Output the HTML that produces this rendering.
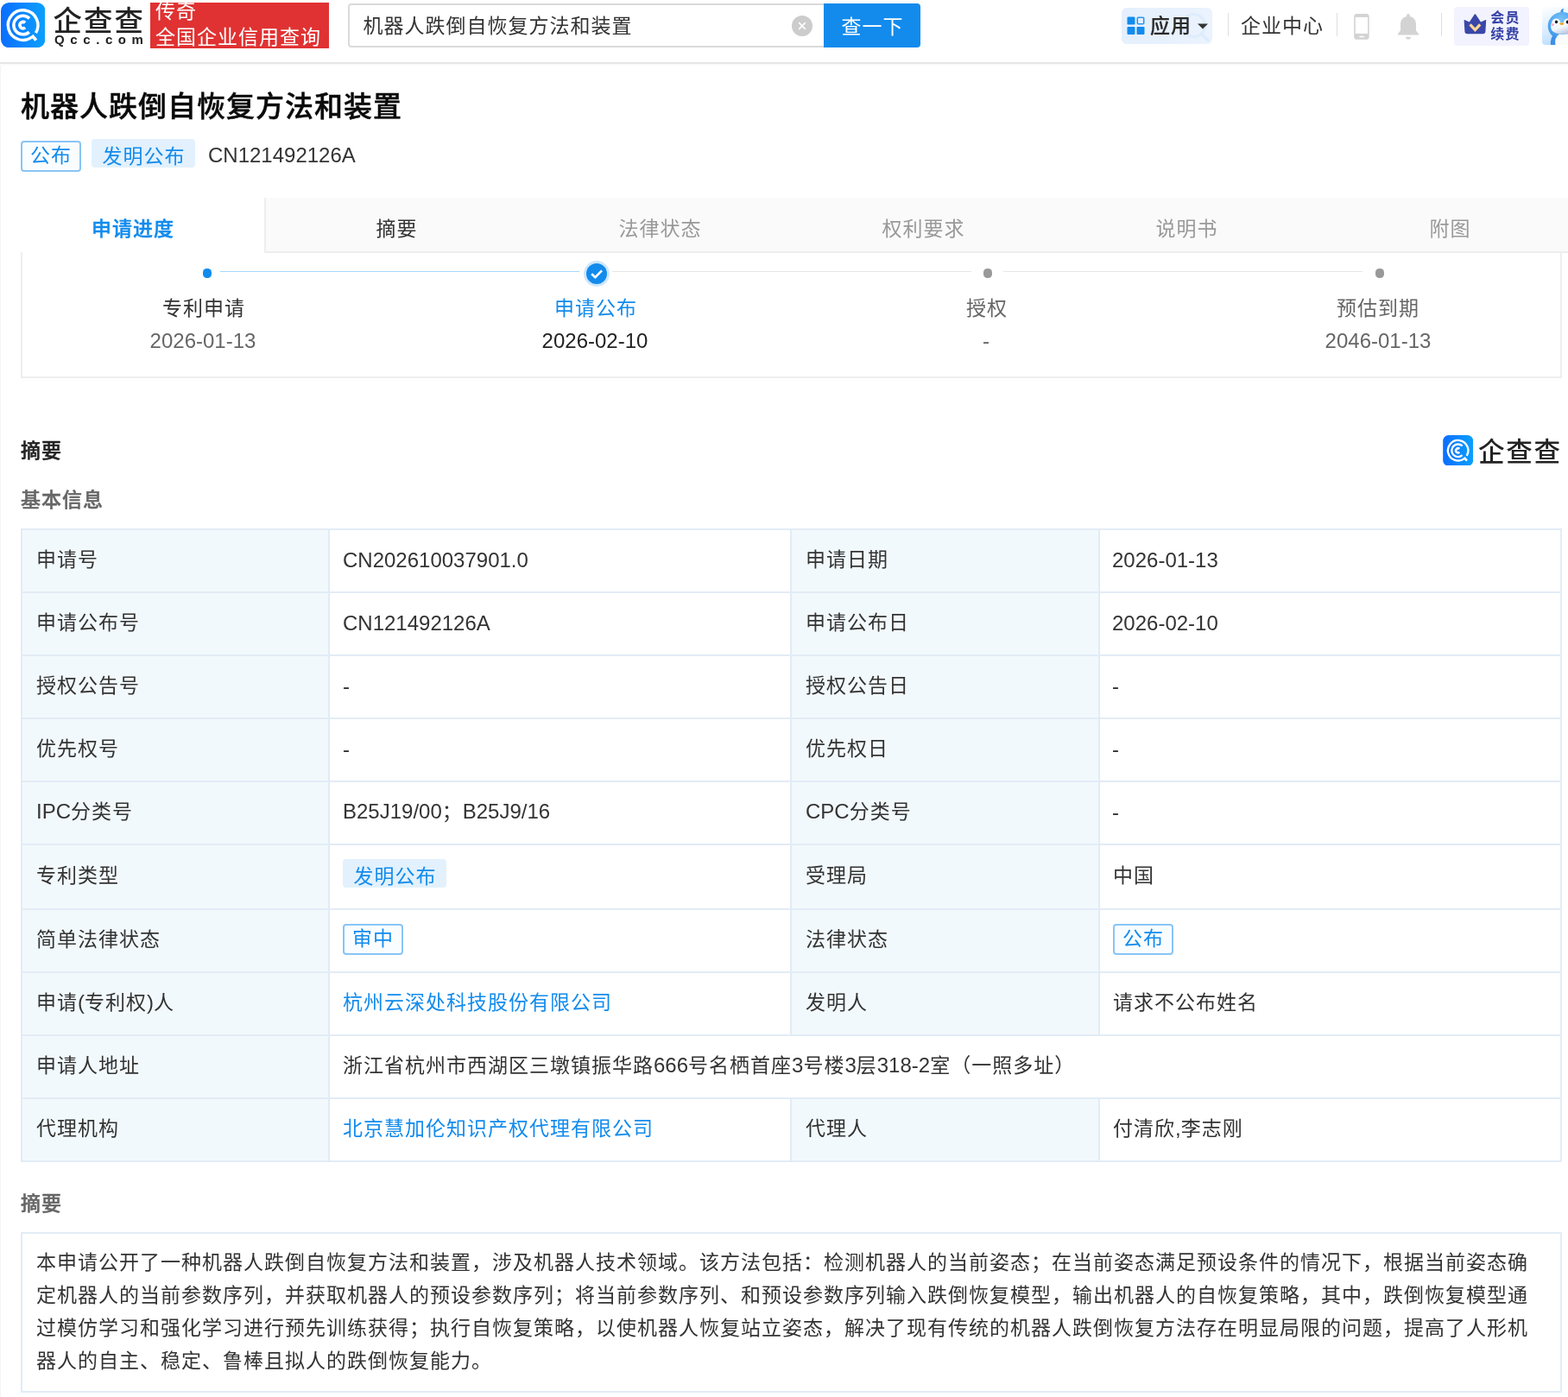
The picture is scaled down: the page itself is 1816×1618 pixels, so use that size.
<!DOCTYPE html>
<html lang="zh-CN">
<head>
<meta charset="utf-8">
<title>机器人跌倒自恢复方法和装置 - 企查查</title>
<style>
*{box-sizing:border-box;margin:0;padding:0}
html,body{width:1816px;height:1618px;overflow:hidden;background:#fff}
body{position:relative;font-family:"Liberation Sans","Noto Sans CJK SC",sans-serif;font-size:23px;letter-spacing:1px;color:#333;line-height:36px}
.l{font-size:24px;letter-spacing:0}
.abs{position:absolute;white-space:nowrap}
a{color:#128bed;text-decoration:none}
/* header */
#hdr{position:absolute;left:0;top:0;width:1816px;height:74px;background:#fff;border-bottom:2px solid #e5e5e5;box-shadow:0 1px 3px rgba(0,0,0,.04)}
#logo{left:1.1px;top:2.8px;width:51.4px;height:52.3px}
#brand{left:61.4px;top:3px;font-size:33.4px;line-height:44px;font-weight:500;color:#222;letter-spacing:2.2px}
#brand2{left:63px;top:35.5px;font-size:15px;line-height:20px;font-weight:700;color:#222;letter-spacing:0}
#brand2 .l{font-size:15px;letter-spacing:6.6px}
#red{left:174px;top:3px;width:207px;height:53px;background:#e03232;color:#fff;overflow:hidden;white-space:normal;line-height:30px;padding:0 0 0 6px}
#red span{display:block;position:relative;top:-5px}
#sbox{left:403px;top:4px;width:553px;height:51px;border:2px solid #dadada;border-radius:4px 0 0 4px;background:#fff}
#stext{left:420.5px;top:12px;line-height:36px;color:#333}
#sclear{left:917px;top:18px;width:24px;height:24px;border-radius:50%;background:#ccc}
#sbtn{left:954px;top:4px;width:112px;height:51px;background:#128bed;border-radius:0 4px 4px 0;color:#fff;text-align:center;line-height:54px;padding-left:1px}
#app{left:1299px;top:9px;width:105px;height:42px;background:linear-gradient(90deg,#e5effd,#eaf3fe);border-radius:6px;overflow:hidden}
#apptx{left:1332px;top:12.3px;font-weight:500;color:#2a2a2a;-webkit-text-stroke:0.2px #2a2a2a}
.vsep{position:absolute;top:15px;width:1px;height:27px;background:#dedede}
#qyzx{left:1437px;top:12.3px;color:#333}
#vip{left:1684px;top:8px;width:87px;height:45px;background:#f2f3fe;border-radius:4px}
#viptx{left:1726.3px;top:10.5px;font-size:16px;letter-spacing:1.2px;line-height:19.3px;font-weight:700;color:#3541a6;white-space:normal;width:36px}
#avatar{left:1786px;top:8.2px;width:44px;height:44px}

/* main */
#lborder{left:0;top:76px;width:1px;height:1600px;background:#f4f4f4;z-index:5}
#title{left:24px;top:100.5px;font-size:33px;letter-spacing:1px;line-height:46px;font-weight:500;color:#0a0a0a;-webkit-text-stroke:0.45px #0a0a0a}
.tag-o{position:absolute;height:36px;width:70px;border:2px solid #88c5f6;border-radius:4px;background:#fafdff;color:#128bed;line-height:30px;padding:0 0 0 9px;white-space:nowrap}
.tag-f{position:absolute;height:33px;width:120px;border-radius:4px;background:#e2f1fd;color:#128bed;line-height:33px;padding:3.5px 0 0 12.5px;white-space:nowrap}
#pubno{left:241px;top:162px;line-height:36px;color:#333}
#tabs{left:0;top:229px;width:1832px;height:64px;background:#fafafa;border-bottom:2px solid #ededed}
#tabs div{position:absolute;top:0;padding-left:2px;width:305px;height:64px;line-height:73px;text-align:center;color:#999}
#tabs .on{background:#fff;color:#128bed;font-weight:500;-webkit-text-stroke:0.4px #128bed;height:64px;left:0;width:308px;border-right:2px solid #eee}
#tabs .nx{color:#333}
#tl{left:24px;top:292px;width:1785px;height:146px;border:2px solid #eee;border-top:0}
.tln{position:absolute;top:314px;height:1px}
.step{position:absolute;width:300px;text-align:center;white-space:nowrap}
.st{top:338.5px;color:#666}
.sd{top:376.6px;color:#666}
.dot{position:absolute;width:10px;height:11px;border-radius:4.5px;background:#999}
.h1{font-weight:500;color:#222;-webkit-text-stroke:0.5px #222}
.h2{font-weight:500;color:#666;-webkit-text-stroke:0.5px #666}

/* table */
#nt{position:absolute;left:24px;top:612px;width:1785px;border-collapse:collapse;table-layout:fixed}
#nt td{border:2px solid #e2ecf6;height:73px;padding:0 16px 3px 16px;vertical-align:middle;line-height:36px;color:#333;background:#fff;white-space:nowrap;overflow:hidden;position:relative}
#nt td.tb{background:#f2f9fc}
#nt td:nth-child(2){padding-left:15px}
#nt td:nth-child(4){padding-left:15px}
#nt td:nth-child(4) .l1{left:-1px}
.l1{position:relative;top:1px}
#nt tr.r6 td{height:75px}
#nt .tag-o,#nt .tag-f{position:relative;display:inline-block;vertical-align:middle}
#nt .tag-f{top:-4px}
#nt .tag-o{top:-1px}
#abs{left:24px;top:1427px;width:1785px;height:186px;border:2px solid #e2ecf6;padding:14px 25px 0 16px;line-height:38px;color:#333;white-space:normal;word-break:break-all;line-break:anywhere}
body{will-change:transform}</style>
</head>
<body>
<div id="hdr">
  <svg id="logo" class="abs" viewBox="0 0 51.4 52.3">
    <defs><linearGradient id="lg" x1="0" y1="0" x2="1" y2="0"><stop offset="0" stop-color="#0c6dff"/><stop offset="1" stop-color="#0aa0ff"/></linearGradient></defs>
    <rect x="0" y="0" width="51.4" height="52.3" rx="9.5" fill="url(#lg)"/>
    <g fill="none" stroke="#fff">
      <path d="M40.43 35.01 A17.3 17.3 0 1 0 36.25 39.73" stroke-width="3.4"/>
      <path d="M36 38 L40.8 43.6" stroke-width="3.7"/>
      <path d="M33.07 18.37 A10.75 10.75 0 1 0 32.79 34.09" stroke-width="3.5"/>
      <path d="M28.08 23.35 A3.7 3.7 0 1 0 28.08 28.85" stroke-width="3.7"/>
    </g>
  </svg>
  <div id="brand" class="abs">企查查</div>
  <div id="brand2" class="abs"><span class="l">Qcc.com</span></div>
  <div id="red" class="abs"><span>传奇<br>全国企业信用查询</span></div>
  <div id="sbox" class="abs"></div>
  <div id="stext" class="abs">机器人跌倒自恢复方法和装置</div>
  <div id="sclear" class="abs"><svg style="display:block" width="24" height="24" viewBox="0 0 24 24"><path d="M8.2 8.2 L15.8 15.8 M15.8 8.2 L8.2 15.8" stroke="#fff" stroke-width="1.8" fill="none"/></svg></div>
  <div id="sbtn" class="abs">查一下</div>
  <div id="app" class="abs"><svg style="position:absolute;left:68px;top:5px" width="37" height="37" viewBox="0 0 37 37"><circle cx="15.6" cy="15.6" r="13" fill="none" stroke="#ddecfd" stroke-width="2.8"/><path d="M25.5 26.5 L32 32.5" stroke="#ddecfd" stroke-width="3.4" stroke-linecap="round"/></svg></div>
  <svg class="abs" style="left:1304.6px;top:18.7px" width="22" height="22" viewBox="0 0 22 22">
    <rect x="0.5" y="0.5" width="9" height="9" rx="1.2" fill="#128bed"/>
    <rect x="12.3" y="1.3" width="7.4" height="7.4" rx="1" fill="none" stroke="#2b97ef" stroke-width="1.6"/>
    <rect x="0.5" y="12" width="9" height="9" rx="1.2" fill="#128bed"/>
    <rect x="11.5" y="12" width="9" height="9" rx="1.2" fill="#128bed"/>
  </svg>
  <div id="apptx" class="abs">应用</div>
  <svg class="abs" style="left:1386px;top:27px" width="14" height="7" viewBox="0 0 14 7"><path d="M1 0.5 L13 0.5 L7 6.5 Z" fill="#333"/></svg>
  <div class="vsep" style="left:1422px"></div>
  <div id="qyzx" class="abs">企业中心</div>
  <div class="vsep" style="left:1548px"></div>
  <svg class="abs" style="left:1568px;top:16px" width="18" height="30" viewBox="0 0 18 30">
    <rect x="0.2" y="0" width="17.5" height="29.8" rx="3.4" fill="#d3d3d3"/>
    <rect x="1.8" y="3.9" width="14.3" height="19" fill="#fff"/>
    <rect x="6.2" y="25.8" width="5.8" height="1.5" rx="0.7" fill="#fff"/>
  </svg>
  <svg class="abs" style="left:1618px;top:15px" width="26" height="32" viewBox="0 0 26 32">
    <path d="M13 1 a1.9 1.9 0 0 1 1.9 1.9 v1.1 c4.6 0.9 7.1 4.6 7.1 9.2 v7.4 l3.1 3.6 v1.3 h-24.2 v-1.3 l3.1 -3.6 v-7.4 c0 -4.6 2.5 -8.3 7.1 -9.2 v-1.1 a1.9 1.9 0 0 1 1.9 -1.9 z M10.1 27.7 h5.8 a2.9 2.9 0 0 1 -5.8 0 z" fill="#d3d3d3"/>
  </svg>
  <div class="vsep" style="left:1669px"></div>
  <div id="vip" class="abs"></div>
  <svg class="abs" style="left:1695px;top:16px" width="27" height="24" viewBox="0 0 27 24">
    <path d="M0.6 7.2 Q1 6.6 1.8 7.2 L6.8 9.6 L12.6 0.8 Q13.4 -0.2 14.2 0.8 L20 9.6 L25 7.2 Q25.8 6.6 26.2 7.2 L25.4 20.6 Q25.2 23.3 22.4 23.3 L4.4 23.3 Q1.6 23.3 1.4 20.6 Z" fill="#3a47a8"/>
    <path d="M7.6 12.4 L13.4 18.6 L19.2 12.4" fill="none" stroke="#ffd596" stroke-width="3.2"/>
  </svg>
  <div id="viptx" class="abs">会员续费</div>
  <svg id="avatar" class="abs" viewBox="0 0 44 44">
    <defs>
      <linearGradient id="avbg" x1="0.2" y1="0" x2="0.5" y2="1"><stop offset="0" stop-color="#fbfdff"/><stop offset="0.5" stop-color="#deefff"/><stop offset="1" stop-color="#b9dcff"/></linearGradient>
      <radialGradient id="avhd" cx="0.45" cy="0.3" r="0.8"><stop offset="0" stop-color="#7cc4f7"/><stop offset="0.6" stop-color="#4aa3ee"/><stop offset="1" stop-color="#3a8ae0"/></radialGradient>
      <linearGradient id="avwh" x1="0" y1="0" x2="0.6" y2="1"><stop offset="0" stop-color="#fff"/><stop offset="0.55" stop-color="#f3f6fc"/><stop offset="1" stop-color="#aab9dc"/></linearGradient>
    </defs>
    <path d="M0 0 H44 V44 H4 Q0 44 0 40 Z" fill="url(#avbg)"/>
    <path d="M21.5 7.5 Q20.5 2.5 25 2 Q24 4.5 25 7 Z" fill="#3f97ea"/>
    <path d="M10 44 Q9 37 13.5 31.5 L16.5 33 Q14.5 38 15.5 44 Z" fill="#3f8fe6"/>
    <ellipse cx="23.3" cy="22" rx="16.6" ry="16" fill="url(#avhd)"/>
    <path d="M10.2 24 Q10.2 14 16 13.5 Q20.5 13.5 21.3 18.5 Q22.8 17.5 24.6 18.5 Q25.5 13.5 30 13.5 H44 V31 Q33 33.5 22 31.5 Q10.5 30.5 10.2 24 Z" fill="url(#avwh)"/>
    <path d="M15.5 44 Q14.5 34.5 20 31.4 Q26 32.4 30 31.6 V44 Z" fill="#fbfbfa"/>
    <ellipse cx="12.4" cy="20.6" rx="1.6" ry="1.6" fill="#ffb0cc"/>
    <ellipse cx="16.5" cy="17.3" rx="1.6" ry="1.9" fill="#0e1022"/>
    <ellipse cx="29.6" cy="17.5" rx="1.8" ry="2" fill="#0e1022"/>
    <ellipse cx="22.8" cy="19.6" rx="2.7" ry="1.35" fill="#f6b928"/>
    <ellipse cx="22.8" cy="19.7" rx="1.7" ry="0.45" fill="#c9720c"/>
  </svg>
</div>

<div id="lborder" class="abs"></div>
<div id="title" class="abs">机器人跌倒自恢复方法和装置</div>
<div class="tag-o" style="left:24px;top:163px">公布</div>
<div class="tag-f" style="left:106px;top:161px">发明公布</div>
<div id="pubno" class="abs"><span class="l">CN121492126A</span></div>
<div id="tabs" class="abs">
  <div class="on">申请进度</div>
  <div class="nx" style="left:306px">摘要</div>
  <div style="left:611px">法律状态</div>
  <div style="left:916px">权利要求</div>
  <div style="left:1221px">说明书</div>
  <div style="left:1526px">附图</div>
</div>
<div id="tl" class="abs"></div>
<div class="tln" style="left:255px;width:416px;background:#a9d5f9"></div>
<div class="tln" style="left:709px;width:416px;background:#e6e6e6"></div>
<div class="tln" style="left:1162px;width:416px;background:#e6e6e6"></div>
<div class="dot" style="left:235px;top:311px;background:#128bed"></div>
<svg class="abs" style="left:676px;top:302px" width="30" height="30" viewBox="0 0 30 30"><circle cx="15" cy="15" r="15" fill="#cfe6fb"/><circle cx="15" cy="15" r="12" fill="#128bed"/><path d="M9.2 15.2 L13.4 19.2 L21 11.4" fill="none" stroke="#fff" stroke-width="2.6"/></svg>
<div class="dot" style="left:1139px;top:311px"></div>
<div class="dot" style="left:1593px;top:311px"></div>
<div class="step st" style="left:86px;color:#333">专利申请</div>
<div class="step sd" style="left:85px"><span class="l">2026-01-13</span></div>
<div class="step st" style="left:540px;color:#128bed">申请公布</div>
<div class="step sd" style="left:539px;color:#222"><span class="l">2026-02-10</span></div>
<div class="step st" style="left:993px">授权</div>
<div class="step sd" style="left:992px"><span class="l">-</span></div>
<div class="step st" style="left:1446px">预估到期</div>
<div class="step sd" style="left:1446px"><span class="l">2046-01-13</span></div>
<div class="abs h1" style="left:24px;top:504px">摘要</div>
<svg class="abs" style="left:1671px;top:503.6px" width="35.4" height="35.6" viewBox="0 0 51.4 52.3">
  <rect x="0" y="0" width="51.4" height="52.3" rx="9.5" fill="url(#lg)"/>
  <g fill="none" stroke="#fff">
    <path d="M40.43 35.01 A17.3 17.3 0 1 0 36.25 39.73" stroke-width="3.4"/>
    <path d="M36 38 L40.8 43.6" stroke-width="3.7"/>
    <path d="M33.07 18.37 A10.75 10.75 0 1 0 32.79 34.09" stroke-width="3.5"/>
    <path d="M28.08 23.35 A3.7 3.7 0 1 0 28.08 28.85" stroke-width="3.7"/>
  </g>
</svg>
<div class="abs" style="left:1712px;top:501.5px;font-size:30.6px;letter-spacing:1.6px;line-height:42px;font-weight:500;color:#222">企查查</div>
<div class="abs h2" style="left:24px;top:561px">基本信息</div>

<table id="nt">
<colgroup><col style="width:356px"><col style="width:535px"><col style="width:357px"><col style="width:535px"></colgroup>
<tbody>
<tr><td class="tb">申请号</td><td><span class="l l1">CN202610037901.0</span></td><td class="tb">申请日期</td><td><span class="l l1">2026-01-13</span></td></tr>
<tr><td class="tb">申请公布号</td><td><span class="l l1">CN121492126A</span></td><td class="tb">申请公布日</td><td><span class="l l1">2026-02-10</span></td></tr>
<tr><td class="tb">授权公告号</td><td><span class="l l1">-</span></td><td class="tb">授权公告日</td><td><span class="l l1">-</span></td></tr>
<tr><td class="tb">优先权号</td><td><span class="l l1">-</span></td><td class="tb">优先权日</td><td><span class="l l1">-</span></td></tr>
<tr><td class="tb"><span class="l">IPC</span>分类号</td><td><span class="l">B25J19/00</span>；<span class="l">B25J9/16</span></td><td class="tb"><span class="l">CPC</span>分类号</td><td><span class="l l1">-</span></td></tr>
<tr class="r6"><td class="tb">专利类型</td><td><span class="tag-f">发明公布</span></td><td class="tb">受理局</td><td>中国</td></tr>
<tr><td class="tb">简单法律状态</td><td><span class="tag-o">审中</span></td><td class="tb">法律状态</td><td><span class="tag-o">公布</span></td></tr>
<tr><td class="tb">申请<span class="l">(</span>专利权<span class="l">)</span>人</td><td><a>杭州云深处科技股份有限公司</a></td><td class="tb">发明人</td><td>请求不公布姓名</td></tr>
<tr><td class="tb">申请人地址</td><td colspan="3">浙江省杭州市西湖区三墩镇振华路<span class="l">666</span>号名栖首座<span class="l">3</span>号楼<span class="l">3</span>层<span class="l">318-2</span>室（一照多址）</td></tr>
<tr><td class="tb">代理机构</td><td><a>北京慧加伦知识产权代理有限公司</a></td><td class="tb">代理人</td><td>付清欣<span class="l">,</span>李志刚</td></tr>
</tbody>
</table>
<div class="abs h2" style="left:24px;top:1376px">摘要</div>
<div id="abs" class="abs">本申请公开了一种机器人跌倒自恢复方法和装置，涉及机器人技术领域。该方法包括：检测机器人的当前姿态；在当前姿态满足预设条件的情况下，根据当前姿态确定机器人的当前参数序列，并获取机器人的预设参数序列；将当前参数序列、和预设参数序列输入跌倒恢复模型，输出机器人的自恢复策略，其中，跌倒恢复模型通过模仿学习和强化学习进行预先训练获得；执行自恢复策略，以使机器人恢复站立姿态，解决了现有传统的机器人跌倒恢复方法存在明显局限的问题，提高了人形机器人的自主、稳定、鲁棒且拟人的跌倒恢复能力。</div>
</body>
</html>
